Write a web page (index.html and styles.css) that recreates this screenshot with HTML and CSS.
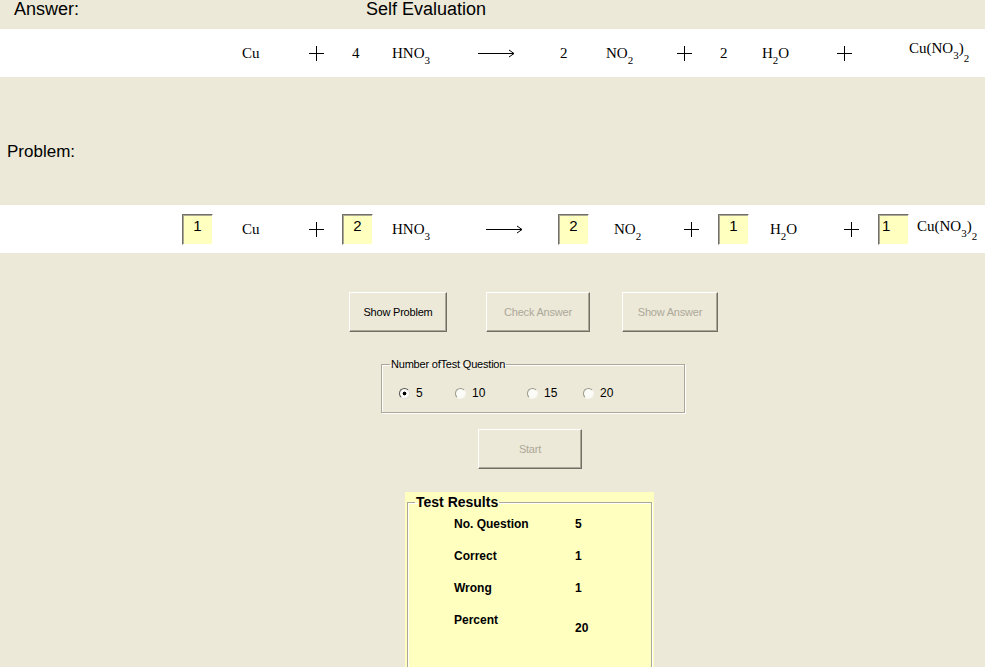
FILE: index.html
```html
<!DOCTYPE html>
<html lang="en">
<head>
    <meta charset="UTF-8">
    <meta name="viewport" content="width=device-width, initial-scale=1.0">
    <title>Self Evaluation</title>
    <link rel="stylesheet" href="styles.css">
</head>
<body>
    <div class="topbar">
        <span class="answer-label">Answer:</span>
        <span>Self Evaluation</span>
    </div>

    <!-- 答案方程式 -->
    <div class="band band-answer">
        <span class="chem">Cu</span>
        <svg class="plus" width="15" height="15" viewBox="0 0 15 15"><path d="M0 7.5H15M7.5 0V15" stroke="#000" stroke-width="1"/></svg>
        <span class="chem">4</span>
        <span class="chem">HNO<sub>3</sub></span>
        <svg class="arrow" width="37" height="9" viewBox="0 0 37 9"><path d="M0 4.5H36M31 1L36 4.5L31 8" stroke="#000" stroke-width="1" fill="none"/></svg>
        <span class="chem">2</span>
        <span class="chem">NO<sub>2</sub></span>
        <svg class="plus" width="15" height="15" viewBox="0 0 15 15"><path d="M0 7.5H15M7.5 0V15" stroke="#000" stroke-width="1"/></svg>
        <span class="chem">2</span>
        <span class="chem">H<sub>2</sub>O</span>
        <svg class="plus" width="15" height="15" viewBox="0 0 15 15"><path d="M0 7.5H15M7.5 0V15" stroke="#000" stroke-width="1"/></svg>
        <span class="chem up">Cu(NO<sub>3</sub>)<sub class="low">2</sub></span>
    </div>

    <div class="middle">
        <span class="problem-label">Problem:</span>
    </div>

    <!-- 题目方程式 -->
    <div class="band band-problem">
        <span class="coef">1</span>
        <span class="chem">Cu</span>
        <svg class="plus" width="15" height="15" viewBox="0 0 15 15"><path d="M0 7.5H15M7.5 0V15" stroke="#000" stroke-width="1"/></svg>
        <span class="coef">2</span>
        <span class="chem">HNO<sub>3</sub></span>
        <svg class="arrow" width="37" height="9" viewBox="0 0 37 9"><path d="M0 4.5H36M31 1L36 4.5L31 8" stroke="#000" stroke-width="1" fill="none"/></svg>
        <span class="coef">2</span>
        <span class="chem">NO<sub>2</sub></span>
        <svg class="plus" width="15" height="15" viewBox="0 0 15 15"><path d="M0 7.5H15M7.5 0V15" stroke="#000" stroke-width="1"/></svg>
        <span class="coef">1</span>
        <span class="chem">H<sub>2</sub>O</span>
        <svg class="plus" width="15" height="15" viewBox="0 0 15 15"><path d="M0 7.5H15M7.5 0V15" stroke="#000" stroke-width="1"/></svg>
        <span class="coef left">1</span>
        <span class="chem up-small">Cu(NO<sub>3</sub>)<sub class="low">2</sub></span>
    </div>

    <div class="buttons">
        <button class="btn btn-problem">Show Problem</button>
        <button class="btn btn-check" disabled>Check Answer</button>
        <button class="btn btn-show" disabled>Show Answer</button>
    </div>

    <fieldset class="group">
        <legend>Number ofTest Question</legend>
        <div class="radios">
            <label class="radio r5"><span class="dot checked"></span>5</label>
            <label class="radio r10"><span class="dot"></span>10</label>
            <label class="radio r15"><span class="dot"></span>15</label>
            <label class="radio r20"><span class="dot"></span>20</label>
        </div>
    </fieldset>

    <button class="btn btn-start" disabled>Start</button>

    <div class="results">
        <fieldset class="results-box">
            <legend>Test Results</legend>
            <div class="row"><span class="key">No. Question</span><span>5</span></div>
            <div class="row"><span class="key">Correct</span><span>1</span></div>
            <div class="row"><span class="key">Wrong</span><span>1</span></div>
            <div class="row"><span class="key">Percent</span><span class="drop">20</span></div>
        </fieldset>
    </div>
</body>
</html>
```

FILE: styles.css
```css
body {
    margin: 0;
    width: 985px;
    height: 667px;
    overflow: hidden;
    background-color: #ece9d8;
    font-family: "Liberation Sans", Arial, sans-serif;
}

/* 顶部标题 */
.topbar {
    display: flex;
    height: 29px;
    font-size: 18px;
    line-height: 18px;
}

.answer-label {
    margin-left: 14px;
    width: 352px;
}

/* 白色方程式条 */
.band {
    display: grid;
    align-items: center;
    height: 48px;
    background-color: #fff;
    font-family: "Liberation Serif", "Times New Roman", serif;
    font-size: 15px;
}

.band-answer {
    padding-left: 242px;
    grid-template-columns: 67px 43px 40px 86px 82px 46px 71px 43px 42px 75px 72px auto;
}

.band-problem {
    padding-left: 182px;
    grid-template-columns: 60px 67px 33px 50px 94px 72px 56px 70px 34px 52px 74px 34px 39px auto;
}

.chem {
    white-space: nowrap;
}

.chem sub {
    font-size: 11px;
    vertical-align: -6px;
    line-height: 0;
}

.chem sub.low {
    vertical-align: -9px;
}

.chem.up {
    margin-bottom: 8px;
}

.chem.up-small {
    margin-bottom: 5px;
}

.plus,
.arrow {
    display: block;
}

.coef {
    box-sizing: border-box;
    width: 31px;
    height: 31px;
    padding-top: 2px;
    background-color: #ffffc0;
    border: 1px solid;
    border-color: #716f64 #fff #fff #716f64;
    box-shadow: inset 1px 1px #aca899;
    font-family: "Liberation Sans", Arial, sans-serif;
    font-size: 15px;
    line-height: 17px;
    text-align: center;
}

.coef.left {
    text-align: left;
    padding-left: 3px;
}

.middle {
    height: 128px;
}

.problem-label {
    display: block;
    padding: 66px 0 0 7px;
    font-size: 17px;
    line-height: 17px;
}

/* 按钮 */
.buttons {
    display: flex;
    margin-top: 39px;
    padding-left: 349px;
}

.btn {
    box-sizing: border-box;
    height: 40px;
    padding: 0;
    background-color: #ece9d8;
    border: 1px solid;
    border-color: #fff #716f64 #716f64 #fff;
    box-shadow: inset -1px -1px #aca899;
    font-family: "Liberation Sans", Arial, sans-serif;
    font-size: 11px;
    letter-spacing: -0.2px;
    color: #000;
}

.btn:disabled {
    color: #aca899;
}

.btn-problem {
    width: 98px;
}

.btn-check {
    width: 104px;
    margin-left: 39px;
}

.btn-show {
    width: 96px;
    margin-left: 32px;
}

.btn-start {
    display: block;
    width: 104px;
    margin: 16px 0 0 478px;
}

/* 题目数量 */
.group {
    box-sizing: border-box;
    width: 304px;
    margin: 26px 0 0 381px;
    padding: 14px 0 11px 0;
    border: 1px solid #aca899;
    box-shadow: 1px 1px #fff, inset 1px 1px #fff;
}

.group legend {
    padding: 0 1px;
    margin-left: 8px;
    font-size: 11px;
    line-height: 13px;
    letter-spacing: -0.2px;
}

.radios {
    display: flex;
    height: 16px;
    align-items: center;
    padding-left: 17px;
    font-size: 12px;
}

.radio {
    display: flex;
    align-items: center;
}

.r5 {
    width: 56px;
}

.r10 {
    width: 72px;
}

.r15 {
    width: 56px;
}

.dot {
    box-sizing: border-box;
    width: 11px;
    height: 11px;
    margin-right: 6px;
    border-radius: 50%;
    border: 1px solid;
    border-color: #9a978a #f4f3ee #f4f3ee #9a978a;
    background-color: #fbfbf8;
}

.dot.checked {
    border-color: #555 #ddd #ddd #555;
    background: radial-gradient(circle, #000 0, #000 1.6px, #fbfbf8 2.2px);
}

/* 测试结果 */
.results {
    width: 249px;
    height: 180px;
    margin: 23px 0 0 405px;
    padding-top: 2px;
    background-color: #ffffc0;
}

.results-box {
    box-sizing: border-box;
    height: 190px;
    margin: 0 2px;
    padding: 7px 0 0 0;
    border: 1px solid #aca899;
    box-shadow: 1px 1px #fff, inset 1px 1px #fff;
}

.results-box legend {
    padding: 0 1px;
    margin-left: 7px;
    font-size: 14px;
    font-weight: bold;
    line-height: 16px;
}

.row {
    display: flex;
    height: 32px;
    padding-left: 46px;
    font-size: 12px;
    font-weight: bold;
    line-height: 14px;
}

.key {
    width: 121px;
}

.drop {
    padding-top: 8px;
}
```
